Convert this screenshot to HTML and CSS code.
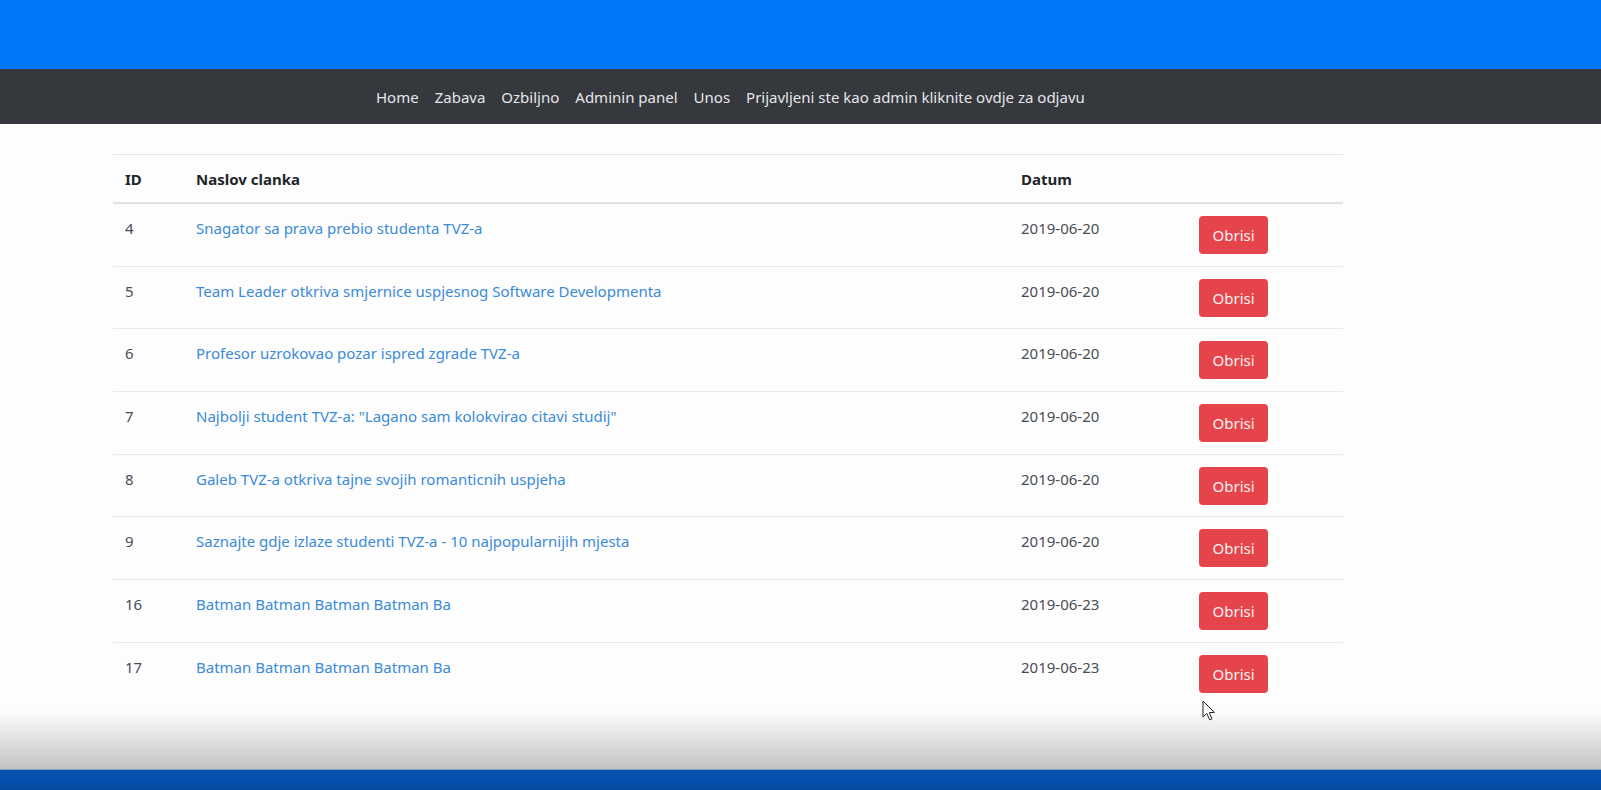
FILE: index.html
```html
<!DOCTYPE html>
<html lang="hr">
<head>
<meta charset="utf-8">
<title>Admin panel</title>
<link rel="stylesheet" href="styles.css">
</head>
<body>
<header class="banner"></header>
<nav class="navbar">
  <ul class="nav-list">
    <li><a href="#">Home</a></li>
    <li><a href="#">Zabava</a></li>
    <li><a href="#">Ozbiljno</a></li>
    <li><a href="#">Adminin panel</a></li>
    <li><a href="#">Unos</a></li>
    <li><a href="#">Prijavljeni ste kao admin kliknite ovdje za odjavu</a></li>
  </ul>
</nav>
<main class="content">
  <table class="articles">
    <colgroup>
      <col class="c-id"><col class="c-title"><col class="c-date"><col class="c-act">
    </colgroup>
    <thead>
      <tr><th>ID</th><th>Naslov clanka</th><th>Datum</th><th></th></tr>
    </thead>
    <tbody>
      <tr><td>4</td><td><a href="#">Snagator sa prava prebio studenta TVZ-a</a></td><td>2019-06-20</td><td><button class="btn-del">Obrisi</button></td></tr>
      <tr><td>5</td><td><a href="#">Team Leader otkriva smjernice uspjesnog Software Developmenta</a></td><td>2019-06-20</td><td><button class="btn-del">Obrisi</button></td></tr>
      <tr><td>6</td><td><a href="#">Profesor uzrokovao pozar ispred zgrade TVZ-a</a></td><td>2019-06-20</td><td><button class="btn-del">Obrisi</button></td></tr>
      <tr><td>7</td><td><a href="#">Najbolji student TVZ-a: "Lagano sam kolokvirao citavi studij"</a></td><td>2019-06-20</td><td><button class="btn-del">Obrisi</button></td></tr>
      <tr><td>8</td><td><a href="#">Galeb TVZ-a otkriva tajne svojih romanticnih uspjeha</a></td><td>2019-06-20</td><td><button class="btn-del">Obrisi</button></td></tr>
      <tr><td>9</td><td><a href="#">Saznajte gdje izlaze studenti TVZ-a - 10 najpopularnijih mjesta</a></td><td>2019-06-20</td><td><button class="btn-del">Obrisi</button></td></tr>
      <tr><td>16</td><td><a href="#">Batman Batman Batman Batman Ba</a></td><td>2019-06-23</td><td><button class="btn-del">Obrisi</button></td></tr>
      <tr><td>17</td><td><a href="#">Batman Batman Batman Batman Ba</a></td><td>2019-06-23</td><td><button class="btn-del">Obrisi</button></td></tr>
    </tbody>
  </table>
</main>
<div class="fade"></div>
<div class="taskbar"></div>
<svg class="cursor" width="14" height="22" viewBox="0 0 14 22" aria-hidden="true">
  <path d="M1 1 L1 17 L4.8 13.4 L7.6 19.8 L10 18.8 L7.3 12.6 L12.4 12.4 Z" fill="#fff" stroke="#222" stroke-width="1" stroke-linejoin="round"/>
</svg>
</body>
</html>
```
FILE: styles.css
```css
* { box-sizing: border-box; }
html, body { margin: 0; padding: 0; }
body {
  background: #fdfdfe;
  font-family: "Noto Sans", "Open Sans", sans-serif;
  font-size: 15px;
  line-height: 24px;
  color: #444;
  height: 790px;
  overflow: hidden;
  position: relative;
}
.banner {
  height: 69px;
  background: #0077fb;
}
.navbar {
  height: 55px;
  background: #35393e;
  display: flex;
  align-items: center;
}
.nav-list {
  list-style: none;
  margin: 0;
  padding: 0 0 0 368px;
  display: flex;
}
.nav-list a {
  display: block;
  padding: 8px 8px;
  color: #e6e6e8;
  text-decoration: none;
  font-size: 15px;
}
.content {
  padding: 30px 0 0 113px;
}
.articles {
  width: 1230px;
  border-collapse: collapse;
  table-layout: fixed;
}
.c-id { width: 71px; }
.c-title { width: 825px; }
.c-date { width: 178px; }
.c-act { width: 156px; }
.articles th {
  text-align: left;
  font-weight: 700;
  color: #212529;
  padding: 12px 12px 11px;
  border-top: 1px solid #e4e6e9;
  border-bottom: 2px solid #dfe1e5;
}
.articles td {
  padding: 12px 12px 11.7px;
  border-top: 1px solid #e8e9ec;
  vertical-align: top;
  color: #4a4d52;
}
.articles thead + tbody tr:first-child td { border-top: none; }
.articles td a {
  color: #3a8bd8;
  text-decoration: none;
}
.btn-del {
  display: block;
  height: 38px;
  padding: 0 13.5px;
  border: 0;
  border-radius: 4px;
  background: #e5444b;
  color: #fff1f1;
  font-family: inherit;
  font-size: 15px;
}
.fade {
  position: absolute;
  left: 0; right: 0;
  top: 705px;
  height: 64px;
  background: linear-gradient(to bottom, rgba(253,253,254,0) 0%, #fbfbfc 12%, #e6e6e8 45%, #c2c2c2 100%);
}
.taskbar {
  position: absolute;
  left: 0; right: 0;
  top: 769px;
  height: 21px;
  border-top: 1px solid #7fa6cf;
  background: linear-gradient(to bottom, #064fac, #0650b0 50%, #05489f);
}
.cursor {
  position: absolute;
  left: 1202px;
  top: 700px;
}
```
